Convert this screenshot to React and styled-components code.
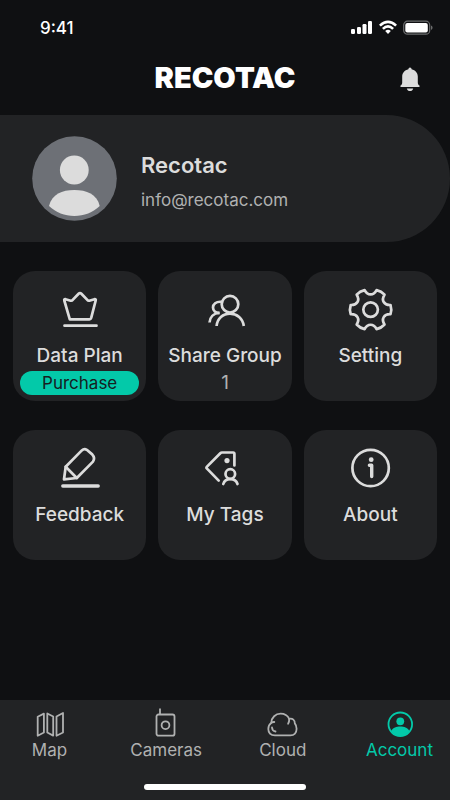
import React from 'react'
import styled, {createGlobalStyle} from 'styled-components'



const tiles = [
    {name: 'Data Plan', icon: CrownIcon, action: 'Purchase'},
    {name: 'Share Group', icon: GroupIcon, count: 1},
    {name: 'Setting', icon: GearIcon},
    {name: 'Feedback', icon: PencilIcon},
    {name: 'My Tags', icon: TagIcon},
    {name: 'About', icon: InfoIcon},
]

const tabs = [
    {name: 'Map', icon: MapIcon},
    {name: 'Cameras', icon: CameraIcon},
    {name: 'Cloud', icon: CloudIcon},
    {name: 'Account', icon: AccountIcon, active: true},
]

function App() {
    return (
        <Container>
            <GlobalStyle />

            <StatusBar>
                <Time>9:41</Time>
                <StatusIcons>
                    <SignalIcon />
                    <WifiIcon />
                    <BatteryIcon />
                </StatusIcons>
            </StatusBar>

            <Header>
                <Logo>RECOTAC</Logo>
                <BellButton type="button" aria-label="Notifications">
                    <BellIcon />
                </BellButton>
            </Header>

            <Profile>
                <Avatar />
                <ProfileText>
                    <Name>Recotac</Name>
                    <Email>info@recotac.com</Email>
                </ProfileText>
            </Profile>

            <Grid>
                {tiles.map(({name, icon: Icon, action, count}) => (
                    <Tile key={name} type="button">
                        <Icon />
                        <TileTitle>{name}</TileTitle>
                        {action && <Pill>{action}</Pill>}
                        {count && <Count>{count}</Count>}
                    </Tile>
                ))}
            </Grid>

            <BottomBar>
                <Tabs>
                    {tabs.map(({name, icon: Icon, active}) => (
                        <Tab key={name} href={'#' + name.toLowerCase()} $active={active}>
                            <Icon />
                            {name}
                        </Tab>
                    ))}
                </Tabs>
                <HomeIndicator />
            </BottomBar>
        </Container>
    )
}

export default App

// status bar

function SignalIcon() {
    return (
        <svg width="22" height="16" viewBox="0 0 22 16" fill="#fff">
            <rect x="0" y="9" width="4" height="5" rx="1.2" />
            <rect x="6" y="7" width="4" height="7" rx="1.2" />
            <rect x="11.500" y="4" width="4" height="10" rx="1.2" />
            <rect x="17" y="1" width="4" height="13" rx="1.2" />
        </svg>
    )
}

function WifiIcon() {
    return (
        <svg width="18" height="16" viewBox="0 0 18 16" fill="none" stroke="#fff" strokeWidth="2.6">
            <path d="M.9 5.600Q9-2 17.100 5.600" />
            <path d="M3.900 8.900Q9 4 14.100 8.900" />
            <path d="M6.200 11Q9 8.700 11.800 11L9 14Z" fill="#fff" stroke="none" />
        </svg>
    )
}

function BatteryIcon() {
    return (
        <svg width="30" height="16" viewBox="0 0 30 16">
            <rect x=".7" y="1.200" width="26" height="13" rx="3.800" fill="none" stroke="#6b6c6d" strokeWidth="1.200" />
            <rect x="2.300" y="2.900" width="22.500" height="9.600" rx="2" fill="#fff" />
            <path d="M28 5.500q1.600.6 1.600 2.200T28 10z" fill="#6b6c6d" />
        </svg>
    )
}

function BellIcon() {
    return (
        <svg width="20" height="24" viewBox="0 0 20 24" fill="#dcdcdc">
            <path d="M8.400 2.200a1.600 1.600 0 0 1 3.200 0C15.500 3 17.800 6 17.800 9.500V15.500c0 1.600.6 2.200 1.500 2.900.8.600.4 1.500-.5 1.500H1.200c-.9 0-1.300-.9-.5-1.500.9-.7 1.500-1.300 1.500-2.900V9.500C2.200 6 4.500 3 8.400 2.200Z" />
            <path d="M6.800 21.400h6.400C12.700 23.200 11.500 24 10 24s-2.700-.8-3.200-2.600Z" />
        </svg>
    )
}

function Avatar() {
    return (
        <svg width="85" height="85" viewBox="0 0 85 85">
            <circle cx="42.500" cy="42.500" r="42.300" fill="#6d7076" />
            <circle cx="42.300" cy="34" r="14.400" fill="#dcdcdc" />
            <path d="M17 70C20 58 30 54 42.300 54S65 58 67.700 70C61 76.500 52 80 42.300 80S24 76.500 17 70Z" fill="#dcdcdc" />
        </svg>
    )
}

// tiles

function TileIcon({children}) {
    return (
        <svg width="48" height="48" viewBox="0 0 48 48" fill="none" stroke="#dcdcdc" strokeWidth="2.700" strokeLinecap="round" strokeLinejoin="round">
            {children}
        </svg>
    )
}

function CrownIcon() {
    return (
        <TileIcon>
            <path d="M13.800 33.300 8.300 14.500q-.4-1.600 1.200-1.300l5.200 1.500q1.200.3 2-.8l5.900-6.200q1.400-1.400 2.800 0l5.900 6.200q.8 1.100 2 .8l5.200-1.500q1.600-.3 1.200 1.300l-4.500 17.400q-.4 1.400-1.800 1.400Z" />
            <path d="M8.500 39.700h32" />
        </TileIcon>
    )
}

function GroupIcon() {
    return (
        <TileIcon>
            <g strokeLinecap="butt">
                <circle cx="29" cy="18.200" r="8.300" />
                <path d="M15.600 40C16.200 32.500 22 27.600 29 27.600S41.800 32.500 42.800 40" />
                <path d="M20 15.800c-5-.3-8 2.300-8 5.700 0 3.300 2.500 5.500 6.600 5.300" />
                <path d="M8.500 36.500c.4-5.200 3.800-9.300 10-9.500" />
            </g>
        </TileIcon>
    )
}

function gearPoint(angle, radius) {
    const rad = (angle * Math.PI) / 180
    return (24.6 + radius * Math.cos(rad)).toFixed(1) + ' ' + (23.6 + radius * Math.sin(rad)).toFixed(1)
}

function GearIcon() {
    const teeth = [0, 60, 120, 180, 240, 300].map((a) => (
        `${a ? 'L' : 'M'}${gearPoint(a - 13, 20.4)}Q${gearPoint(a, 21.4)} ${gearPoint(a + 13, 20.4)}` +
        `C${gearPoint(a + 18, 14)} ${gearPoint(a + 42, 14)} ${gearPoint(a + 47, 20.4)}`
    ))
    return (
        <TileIcon>
            <path d={teeth.join('') + 'Z'} />
            <circle cx="24.600" cy="23.600" r="7.300" />
        </TileIcon>
    )
}

function PencilIcon() {
    return (
        <TileIcon>
            <path d="M8 34.300 9.700 21.800 25.800 5.400q2.400-2.200 5-.6l5.400 4.600q3.200 3.600.8 7.200L20.800 33Z" />
            <path d="M9.700 21.800 20.800 33" />
            <path d="M6.800 41h35.400" strokeWidth="3.400" />
        </TileIcon>
    )
}

function TagIcon() {
    return (
        <TileIcon>
            <path d="M33.400 20.500V8.800q0-1.300-1.300-1.300H21q-1 0-1.700.7L6 21.600q-1 1 0 2L17.700 35.600" />
            <circle cx="26" cy="15.600" r="2.600" fill="#dcdcdc" stroke="none" />
            <circle cx="29.300" cy="29" r="4.800" />
            <path d="M22.300 39c.8-3 3.300-4.900 7-4.900s6.300 1.900 7.200 4.900" />
        </TileIcon>
    )
}

function InfoIcon() {
    return (
        <TileIcon>
            <circle cx="24.600" cy="23" r="18.200" />
            <circle cx="25.200" cy="14.700" r="2.400" fill="#dcdcdc" stroke="none" />
            <path d="M23.400 20.200h2.300v11.400" strokeWidth="3.400" />
        </TileIcon>
    )
}

// bottom tabs

function TabIcon({children}) {
    return (
        <svg width="32" height="32" viewBox="0 0 32 32" fill="none" stroke="currentColor" strokeWidth="1.800" strokeLinejoin="round" overflow="visible">
            {children}
        </svg>
    )
}

function MapIcon() {
    return (
        <TabIcon>
            <path d="M3.700 7.700 9.900 4.600V23.500L3.700 26.700Z" />
            <path d="M13.300 4.500 19.200 7.500V26.600L13.300 23.500Z" />
            <path d="M22.500 7.500 29 4V23.500L22.500 26.700Z" />
        </TabIcon>
    )
}

function CameraIcon() {
    return (
        <TabIcon>
            <rect x="6.500" y="5.500" width="18" height="21.200" rx="2" />
            <path d="M10-.6v6" />
            <circle cx="15.500" cy="16.200" r="3.900" />
        </TabIcon>
    )
}

function CloudIcon() {
    return (
        <TabIcon>
            <g strokeLinecap="round">
                <path d="M8 26.400C3.500 26.400 1.300 23.500 1.300 20c0-3 1-4.800 3-6.300C4.500 8.500 8.500 4.700 13.600 4.700c3.900 0 7 1.800 8.600 5.100 3.500-.6 5.800 1.200 5.600 4.600 1.300 1.600 1.800 3.400 1.800 5.300 0 4-2.400 6.700-6.200 6.700Z" />
                <path d="M4.300 13.700q1.300-.8 3-.7M22.200 9.800q.2 3-1.100 5M5 18.500q.1 3.400 3.500 4" />
            </g>
        </TabIcon>
    )
}

function AccountIcon() {
    return (
        <TabIcon>
            <circle cx="17.300" cy="15.300" r="11.800" />
            <circle cx="17.300" cy="12.300" r="3.900" fill="currentColor" stroke="none" />
            <path d="M8.100 22C10.300 18.500 13.300 17.500 17.300 17.500s7 1 9.200 4.500C24.300 25.500 21.300 27 17.300 27s-7-1.500-9.200-5Z" fill="currentColor" stroke="none" />
        </TabIcon>
    )
}

const GlobalStyle = createGlobalStyle`
* {
    box-sizing: border-box;
}
body {
    margin: 0;
    background: #0f1012;
    font-family: Inter, "Liberation Sans", sans-serif;
}
svg {
    display: block;
    flex-shrink: 0;
}
button {
    border: 0;
    padding: 0;
    background: none;
    font: inherit;
    cursor: pointer;
}
`

const Container = styled.div`
min-height: 100vh;
display: flex;
flex-direction: column;
background: #0f1012;
color: #dcdcdc;
`

const StatusBar = styled.div`
display: flex;
justify-content: space-between;
align-items: center;
padding: 18px 17px 0 40px;
`

const Time = styled.div`
color: #fff;
font-size: 17px;
font-weight: 500;
line-height: 20px;
`

const StatusIcons = styled.div`
display: flex;
gap: 6px;
`

const Header = styled.header`
display: grid;
grid-template-columns: 1fr auto 1fr;
align-items: center;
padding: 23px 30px 20px;
`

const Logo = styled.h1`
grid-column: 2;
margin: 0;
color: #fff;
font-size: 29px;
font-weight: 900;
line-height: 34px;
`

const BellButton = styled.button`
justify-self: end;
padding-top: 2px;
`

const Profile = styled.section`
display: flex;
align-items: center;
gap: 24px;
padding: 21px 32px;
background: #222325;
border-radius: 0 64px 64px 0;
`

const ProfileText = styled.div`
display: flex;
flex-direction: column;
gap: 11px;
padding-top: 5px;
`

const Name = styled.h2`
margin: 0;
font-size: 22px;
font-weight: 600;
line-height: 26px;
`

const Email = styled.div`
color: #b0b1b1;
font-size: 17px;
line-height: 22px;
`

const Grid = styled.main`
display: grid;
grid-template-columns: repeat(3, 1fr);
gap: 29px 12px;
padding: 29px 13px;
`

const Tile = styled.button`
display: flex;
flex-direction: column;
align-items: center;
justify-content: flex-start;
min-height: 130px;
padding: 15px 7px 6px;
color: #dcdcdc;
background: #222325;
border-radius: 22px;
`

const TileTitle = styled.span`
margin: 11px 0 4px;
font-size: 19px;
font-weight: 500;
line-height: 22px;
white-space: nowrap;
`

const Pill = styled.span`
align-self: stretch;
background: #03c9a9;
border-radius: 12px;
color: #16201f;
font-size: 17px;
line-height: 24px;
`

const Count = styled.span`
color: #b0b1b1;
font-size: 19px;
line-height: 24px;
`

const BottomBar = styled.footer`
margin-top: auto;
display: flex;
flex-direction: column;
gap: 25px;
padding: 9px 0 10px;
background: #222325;
`

const Tabs = styled.nav`
display: flex;
justify-content: space-between;
padding: 0 17px 0 16px;
`

const Tab = styled.a`
display: flex;
flex-direction: column;
align-items: center;
width: 67px;
color: ${(props) => (props.$active ? '#03c9a9' : '#b0b1b1')};
font-size: 17px;
line-height: 18px;
text-decoration: none;
`

const HomeIndicator = styled.div`
align-self: center;
width: 36%;
height: 6px;
background: #fff;
border-radius: 3px;
`
